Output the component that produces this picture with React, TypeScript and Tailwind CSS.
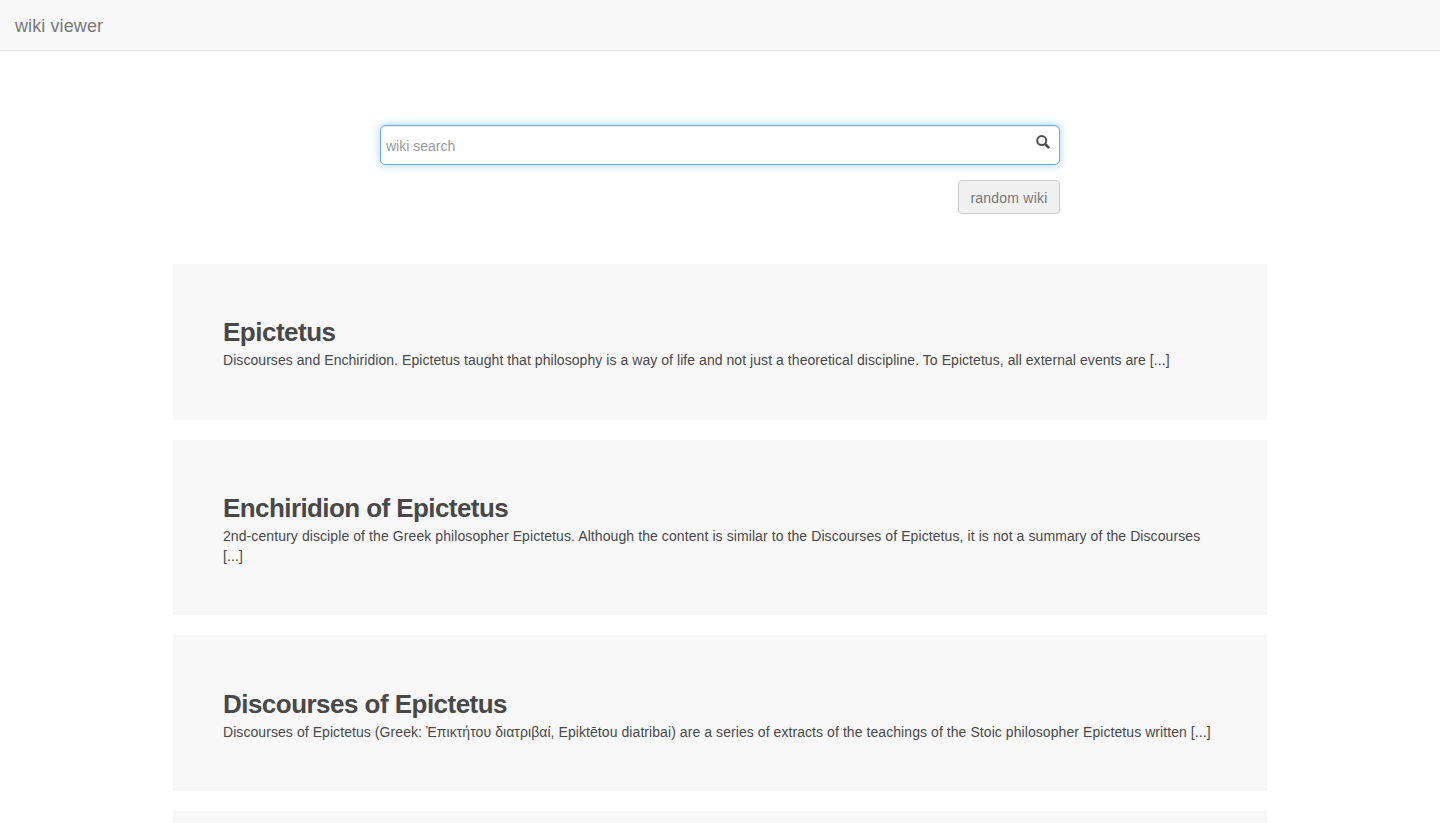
import React from "react";

type Article = {
  title: string;
  box: string;
  heading: string;
  body: string;
  lines: string[];
};

const articles: Article[] = [
  {
    title: "Epictetus",
    box: "h-[156px] pt-[50px]",
    heading: "tracking-[-0.5px]",
    body: "tracking-[0.057px]",
    lines: [
      "Discourses and Enchiridion. Epictetus taught that philosophy is a way of life and not just a theoretical discipline. To Epictetus, all external events are [...]",
    ],
  },
  {
    title: "Enchiridion of Epictetus",
    box: "h-[175px] pt-[50px]",
    heading: "tracking-[-0.58px]",
    body: "tracking-[0.088px]",
    lines: [
      "2nd-century disciple of the Greek philosopher Epictetus. Although the content is similar to the Discourses of Epictetus, it is not a summary of the Discourses",
      "[...]",
    ],
  },
  {
    title: "Discourses of Epictetus",
    box: "h-[156px] pt-[51px]",
    heading: "tracking-[-0.53px]",
    body: "tracking-[0.07px]",
    lines: [
      "Discourses of Epictetus (Greek: Ἐπικτήτου διατριβαί, Epiktētou diatribai) are a series of extracts of the teachings of the Stoic philosopher Epictetus written [...]",
    ],
  },
  { title: "", box: "h-[156px]", heading: "", body: "", lines: [] },
];

function SearchIcon() {
  return (
    <svg className="mb-[6px] size-[14px] overflow-visible" viewBox="0 0 14 14" fill="none" stroke="#4f4f4f">
      <circle cx="5.7" cy="5.6" r="4.5" strokeWidth="2" />
      <path d="M9.1 9L13.2 13.1" strokeWidth="2.6" />
    </svg>
  );
}

export default function App() {
  return (
    <div className="h-[823px] overflow-hidden bg-white font-['Liberation_Sans',Arial,sans-serif] text-sm leading-5 text-[#484848]">
      <nav className="flex h-[51px] items-center border-b border-[#e7e7e7] bg-[#f8f8f8] px-[15px] pt-0.5">
        <a className="text-lg leading-5 tracking-[0.1px] text-[#777]">wiki viewer</a>
      </nav>
      <div className="mx-auto mt-[74px] flex w-[680px] flex-col items-end">
        <div className="flex h-10 w-full items-center rounded-[5px] border border-[#66afe9] bg-white pr-[9px] pl-[5px] shadow-[inset_0_1px_1px_rgba(0,0,0,0.075),0_0_8px_rgba(102,175,233,0.6)]">
          <span className="flex-1 pt-0.5 text-[#999]">wiki search</span>
          <SearchIcon />
        </div>
        <button className="mt-[15px] h-[34px] w-[102px] rounded-[4px] border border-[#ccc] bg-[#f0f0f0] pt-0.5 tracking-[0.23px] text-[#777]">
          random wiki
        </button>
      </div>
      <main className="mx-auto mt-[50px] flex w-[1094px] flex-col gap-5">
        {articles.map((a, i) => (
          <article key={i} className={`${a.box} shrink-0 bg-[#f8f8f8] px-[50px]`}>
            <h2 className={`h-9 text-[26px] leading-9 font-bold whitespace-nowrap ${a.heading}`}>{a.title}</h2>
            {a.lines.map((line) => (
              <p key={line} className={`whitespace-nowrap ${a.body}`}>
                {line}
              </p>
            ))}
          </article>
        ))}
      </main>
    </div>
  );
}
